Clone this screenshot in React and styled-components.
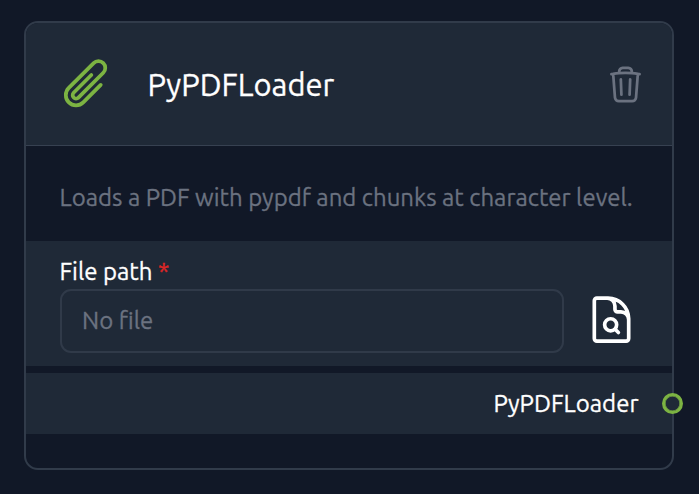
import React from "react";
import styled, { createGlobalStyle } from "styled-components";
import {
  HiOutlinePaperClip,
  HiOutlineTrash,
  HiOutlineDocumentMagnifyingGlass,
} from "react-icons/hi2";

const GlobalStyle = createGlobalStyle`
  * { box-sizing: border-box; }
  body {
    margin: 0;
    background: #111827;
    font-family: "Ubuntu", "Noto Sans", sans-serif;
    -webkit-text-stroke: 0.3px currentColor;
    overflow: hidden;
  }
`;

const Canvas = styled.main`
  width: 699px;
  height: 494px;
  padding: 21px 25px 24px 24px;
  background: #111827;
`;

const NodeCard = styled.article`
  display: flex;
  flex-direction: column;
  height: 449px;
  border: 2px solid #313b4a;
  border-radius: 14px;
  background: #111827;
`;

const Header = styled.header`
  display: flex;
  align-items: center;
  height: 123px;
  padding: 0 26px 0 32.8px;
  border-bottom: 1px solid #374151;
  border-radius: 12px 12px 0 0;
  background: #1f2937;
`;

const ClipIcon = styled(HiOutlinePaperClip)`
  width: 54.5px;
  height: 54.5px;
  margin-bottom: 1px;
  stroke-width: 1.65;
  color: #7cb342;
`;

const Title = styled.h1`
  flex: 1;
  margin: 2px 0 0 34.2px;
  font-size: 30.9px;
  font-weight: 400;
  line-height: 40px;
  color: #fff;
`;

const IconButton = styled.button`
  display: flex;
  padding: 0;
  border: 0;
  background: none;
  color: ${(p) => p.$color};

  svg {
    width: ${(p) => p.$size}px;
    height: ${(p) => p.$size}px;
    stroke-width: 1.6;
  }
`;

const Description = styled.p`
  height: 95px;
  margin: 0;
  padding: 35px 0 0 33.5px;
  font-size: 23.98px;
  line-height: 34px;
  white-space: nowrap;
  color: #6b7280;
`;

const Field = styled.section`
  height: 125px;
  margin-bottom: 7px;
  padding: 14px 33px 0 34px;
  background: #1f2937;
`;

const Label = styled.label`
  display: block;
  height: 34px;
  margin-left: -0.5px;
  font-size: 24px;
  line-height: 34px;
  color: #fff;
`;

const Required = styled.span`
  color: #dc2626;
`;

const InputRow = styled.div`
  display: flex;
  align-items: flex-start;
  gap: 20px;

  button {
    margin-top: 4.4px;
  }
`;

const FileInput = styled.div`
  width: 504px;
  height: 64px;
  padding: 0 20px;
  border: 2px solid #303a49;
  border-radius: 11px;
  font-size: 24px;
  line-height: 60px;
  color: #6b7280;
`;

const Output = styled.section`
  position: relative;
  display: flex;
  align-items: center;
  justify-content: flex-end;
  height: 61px;
  padding: 0 33.5px 1px 0;
  background: #1f2937;
  font-size: 24px;
  color: #fff;
`;

const Handle = styled.span`
  position: absolute;
  top: 20px;
  right: -11px;
  width: 21px;
  height: 21px;
  border: 3px solid #7cb342;
  border-radius: 50%;
  background: #1f2937;
  box-shadow: inset 0 0 0 0.6px #7cb342;
`;

export default function App() {
  return (
    <>
      <GlobalStyle />
      <Canvas>
        <NodeCard>
          <Header>
            <ClipIcon />
            <Title>PyPDFLoader</Title>
            <IconButton $size={41} $color="#6b7280" aria-label="Delete">
              <HiOutlineTrash />
            </IconButton>
          </Header>
          <Description>
            Loads a PDF with pypdf and chunks at character level.
          </Description>
          <Field>
            <Label>
              File path <Required>*</Required>
            </Label>
            <InputRow>
              <FileInput>No file</FileInput>
              <IconButton $size={55} $color="#fff" aria-label="Browse">
                <HiOutlineDocumentMagnifyingGlass />
              </IconButton>
            </InputRow>
          </Field>
          <Output>
            PyPDFLoader
            <Handle />
          </Output>
        </NodeCard>
      </Canvas>
    </>
  );
}
